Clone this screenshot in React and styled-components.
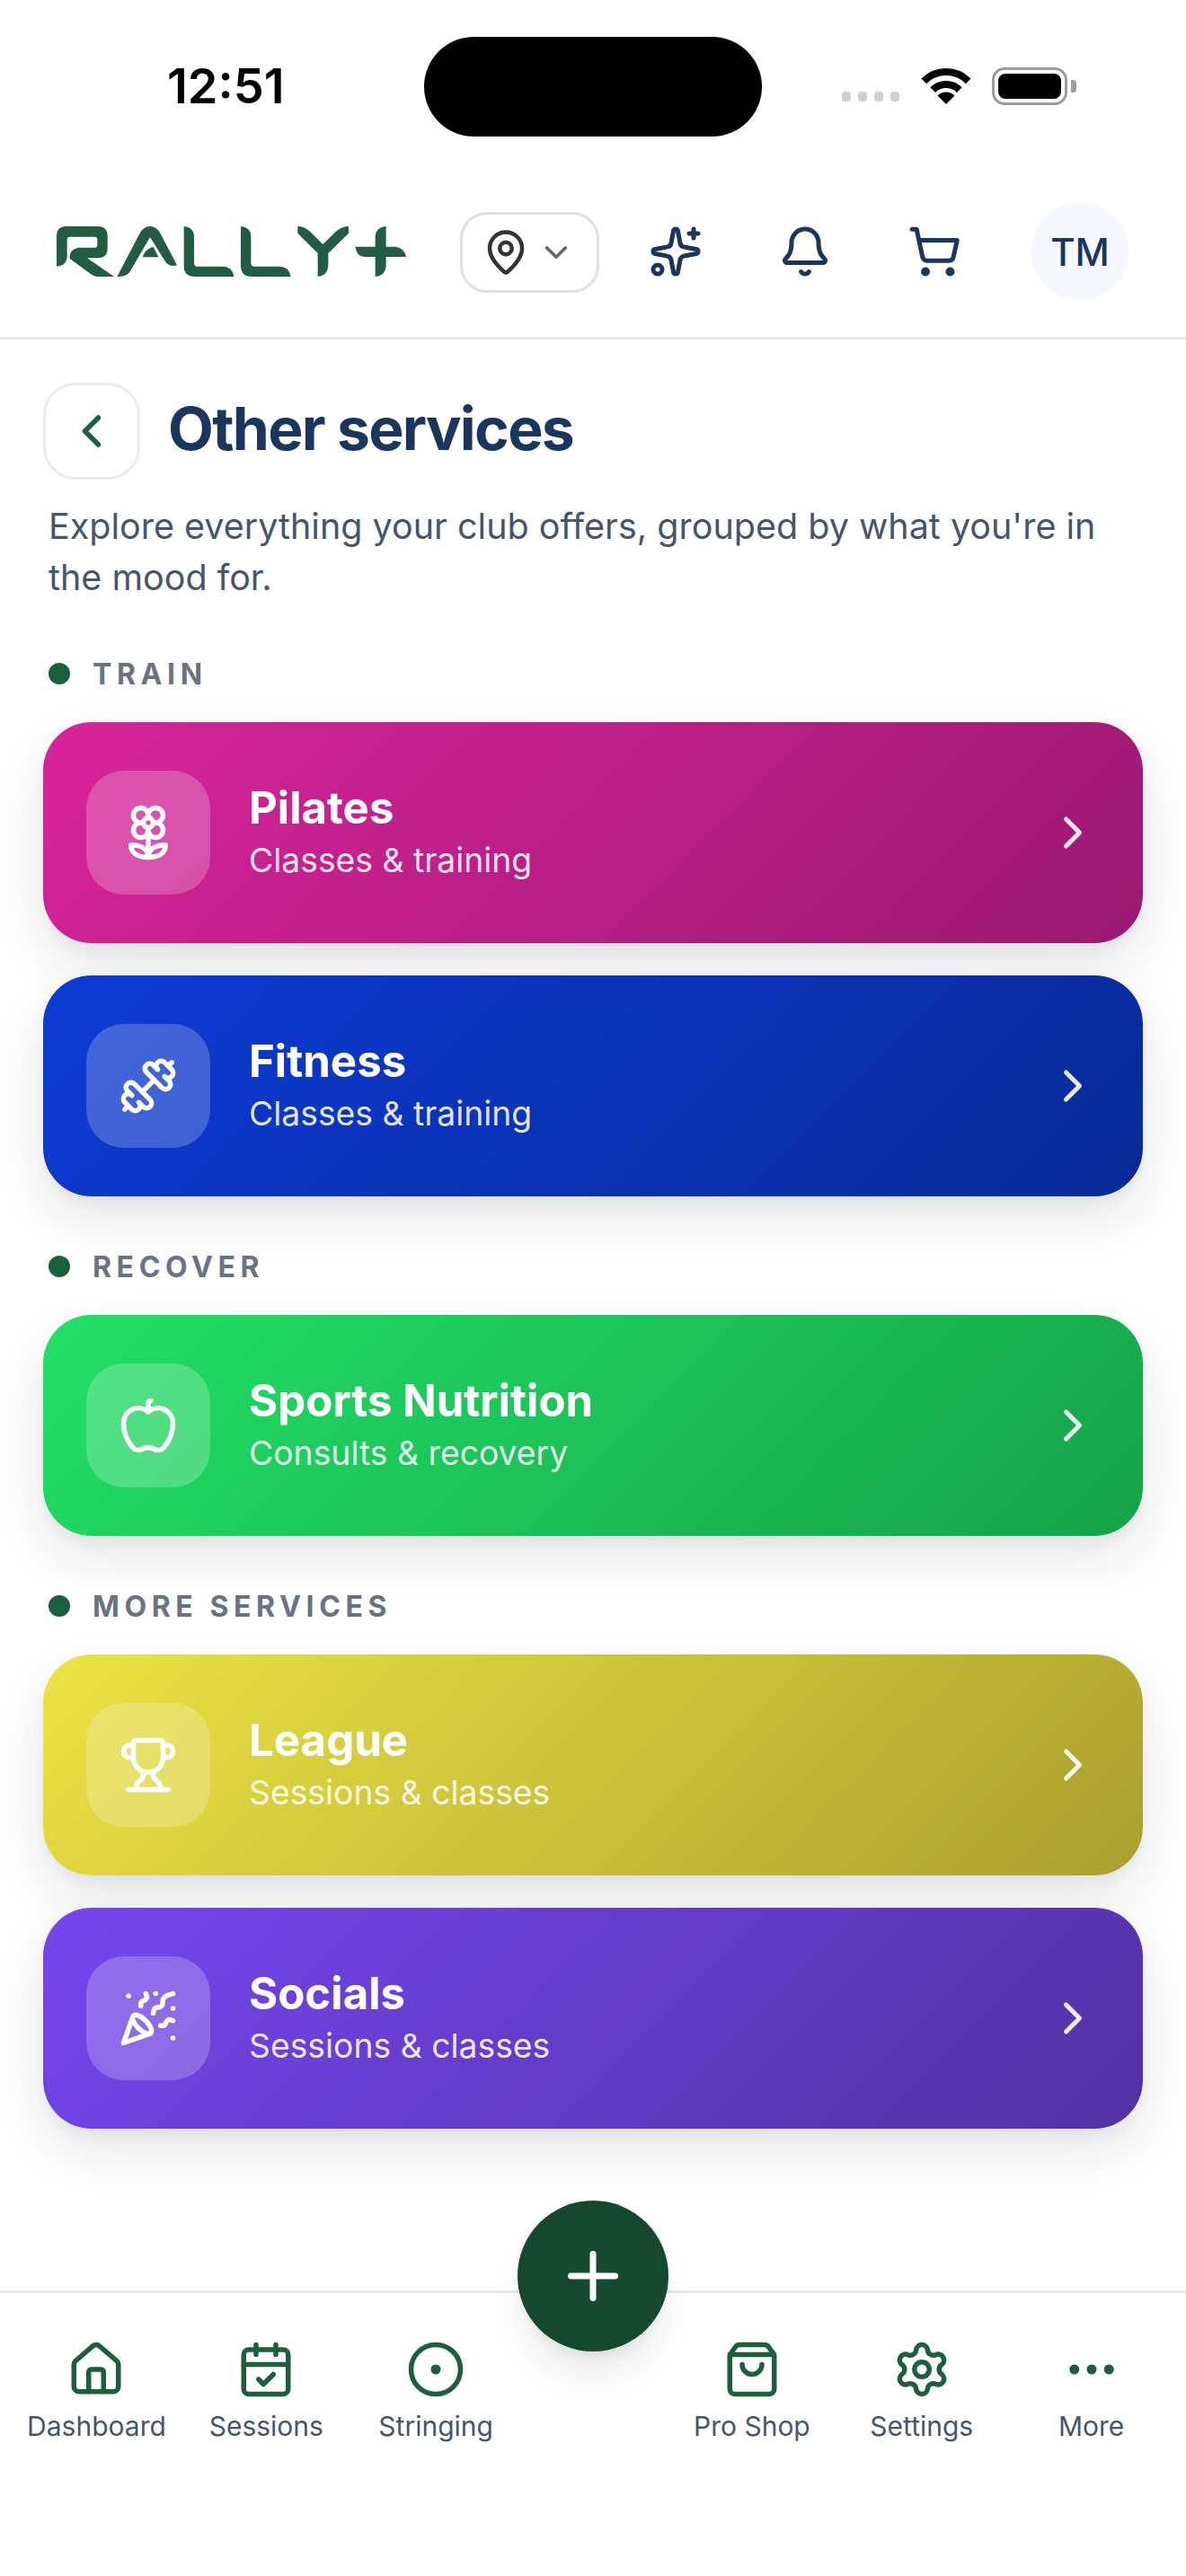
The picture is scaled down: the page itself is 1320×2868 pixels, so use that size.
import React from 'react';
import styled, { createGlobalStyle } from 'styled-components';
import {
  Apple, Bell, CalendarCheck, ChevronDown, ChevronLeft, ChevronRight, CircleDot, Dumbbell, Ellipsis,
  Flower2, House, MapPin, PartyPopper, Plus, Settings, ShoppingBag, ShoppingCart, Sparkles, Trophy,
} from 'lucide-react';

const GlobalStyle = createGlobalStyle`
  * { box-sizing: border-box; }
  html, body { margin: 0; padding: 0; background: #fff; }
  body { font-family: Inter, "Noto Sans", sans-serif; }
`;

const Page = styled.div`
  position: relative;
  width: 1320px;
  height: 2868px;
  display: flex;
  flex-direction: column;
  overflow: hidden;
  background: #fff;
`;

// status bar
const StatusBar = styled.div`
  height: 183px;
  flex: none;
  padding: 41px 0 0 186px;
  display: flex;
  align-items: flex-start;
`;
const Time = styled.div`
  width: 286px;
  height: 110px;
  line-height: 110px;
  font-size: 54px;
  font-weight: 600;
  color: #000;
`;
const Island = styled.div`
  width: 376px;
  height: 111px;
  border-radius: 56px;
  background: #000;
`;
const StatusIcons = styled.div`
  margin-left: 89px;
  height: 110px;
  display: flex;
  align-items: center;
`;
const SignalDots = styled.div`
  display: flex;
  gap: 8px;
  margin: 22px 23px 0 0;
`;
const SignalDot = styled.span`
  width: 10px;
  height: 11px;
  border-radius: 4px;
  background: #cfcfcf;
`;
const Battery = styled.div`
  margin-left: 22px;
  width: 84px;
  height: 42px;
  padding: 4px;
  border: 3px solid #9c9c9c;
  border-radius: 14px;
`;
const BatteryFill = styled.div`
  width: 100%;
  height: 100%;
  border-radius: 8px;
  background: #000;
`;
const BatteryCap = styled.div`
  margin-left: 4px;
  width: 6px;
  height: 14px;
  border-radius: 0 4px 4px 0;
  background: #9c9c9c;
`;

// app header
const Header = styled.header`
  height: 195px;
  flex: none;
  display: flex;
  align-items: center;
  padding: 2px 0 0 63px;
  border-bottom: 3px solid #e2e8f0;
`;
const Logo = styled.svg`
  width: 389px;
  height: 56px;
  flex: none;
`;
const LocationButton = styled.div`
  margin: 2px 13px 0 60px;
  width: 155px;
  height: 90px;
  padding-right: 4px;
  display: flex;
  align-items: center;
  justify-content: center;
  gap: 8px;
  border: 3px solid #e0e0e0;
  border-radius: 30px;
  color: #333;
`;
const HeaderIcon = styled.div`
  width: 144px;
  display: flex;
  justify-content: center;
  color: #1a365d;
`;
const Avatar = styled.div`
  margin-left: 36px;
  width: 108px;
  height: 108px;
  border-radius: 50%;
  background: #f5f8fc;
  color: #1a365d;
  display: flex;
  align-items: center;
  justify-content: center;
  font-size: 42px;
  font-weight: 500;
`;

// content
const Main = styled.main`
  flex: 1;
  padding: 48px 48px 0;
`;
const TitleRow = styled.div`
  display: flex;
  align-items: center;
  gap: 31px;
`;
const BackButton = styled.div`
  width: 108px;
  height: 108px;
  display: flex;
  align-items: center;
  justify-content: center;
  border: 3px solid #e8eded;
  border-radius: 36px;
  color: #1c5f3c;
`;
const Title = styled.h1`
  margin: 0 0 6px;
  font-size: 66px;
  font-weight: 700;
  letter-spacing: -1.7px;
  color: #1a365d;
`;
const Description = styled.p`
  margin: 24px 0 0;
  padding: 0 6px;
  font-size: 39.5px;
  line-height: 57px;
  color: #475569;
`;
const SectionLabel = styled.div`
  margin: 60px 0 36px;
  padding-left: 6px;
  height: 36px;
  display: flex;
  align-items: center;
  gap: 25px;
  font-size: 32px;
  font-weight: 700;
  letter-spacing: 0.175em;
  color: #6b7280;
`;
const LabelDot = styled.span`
  width: 24px;
  height: 24px;
  border-radius: 50%;
  background: #1c5f3c;
`;
const Cards = styled.div`
  display: flex;
  flex-direction: column;
  gap: 36px;
`;
const Card = styled.div`
  height: 246px;
  padding: 0 48px;
  display: flex;
  align-items: center;
  gap: 43px;
  border-radius: 54px;
  background: linear-gradient(135deg, ${p => p.$from}, ${p => p.$to});
  box-shadow: 0 24px 60px rgba(15, 23, 42, 0.11), 0 8px 16px rgba(15, 23, 42, 0.04);
  color: #fff;
`;
const CardIcon = styled.div`
  width: 138px;
  height: 138px;
  flex: none;
  display: flex;
  align-items: center;
  justify-content: center;
  border-radius: 42px;
  background: rgba(255, 255, 255, 0.22);
`;
const CardText = styled.div`
  flex: 1;
`;
const CardName = styled.div`
  font-size: 49.2px;
  line-height: 60px;
  font-weight: 700;
`;
const CardSub = styled.div`
  font-size: 37.3px;
  line-height: 54px;
  padding-top: 2px;
  color: rgba(255, 255, 255, 0.88);
`;
const CardArrow = styled(ChevronRight)`
  flex: none;
  color: rgba(255, 255, 255, 0.9);
`;

// bottom nav
const BottomNav = styled.nav`
  height: 318px;
  flex: none;
  padding: 52px 11px 0 13px;
  display: flex;
  align-items: flex-start;
  border-top: 3px solid #e2e8f0;
`;
const NavItem = styled.div`
  width: 189px;
  display: flex;
  flex-direction: column;
  align-items: center;
  gap: 9px;
  font-size: 30px;
  line-height: 42px;
  color: #475569;
  svg { color: #1c5f3c; }
`;
const NavSpacer = styled.div`
  width: 163px;
`;
const Fab = styled.div`
  position: absolute;
  left: 576px;
  top: 2450px;
  width: 168px;
  height: 168px;
  display: flex;
  align-items: center;
  justify-content: center;
  border-radius: 50%;
  background: #16482f;
  color: #fff;
  box-shadow: 0 30px 45px -9px rgba(0, 0, 0, 0.1), 0 12px 18px -12px rgba(0, 0, 0, 0.1);
`;

const sections = [
  {
    label: 'TRAIN',
    cards: [
      { name: 'Pilates', sub: 'Classes & training', icon: Flower2, from: '#d9249b', to: '#9a1970' },
      { name: 'Fitness', sub: 'Classes & training', icon: Dumbbell, from: '#0d3bd6', to: '#082a96' },
    ],
  },
  {
    label: 'RECOVER',
    cards: [{ name: 'Sports Nutrition', sub: 'Consults & recovery', icon: Apple, from: '#22e066', to: '#16a34a' }],
  },
  {
    label: 'MORE SERVICES',
    cards: [
      { name: 'League', sub: 'Sessions & classes', icon: Trophy, from: '#ece344', to: '#aaa02f' },
      { name: 'Socials', sub: 'Sessions & classes', icon: PartyPopper, from: '#7446ee', to: '#5331a3' },
    ],
  },
];

const WifiIcon = () => (
  <svg width="58" height="42" viewBox="0 0 58 42" fill="none">
    <path d="M4.3 15.3a35 35 0 0 1 49.4 0" stroke="#000" strokeWidth="8" />
    <path d="M14.2 25.2a21 21 0 0 1 29.6 0" stroke="#000" strokeWidth="8" />
    <path d="M29 41 19.5 31.5a13.5 13.5 0 0 1 19 0Z" fill="#000" />
  </svg>
);

const RallyLogo = () => (
  <Logo viewBox="68 182 1167 168" fill="#225c43">
    <path d="M68 316V215Q68 182 100 182H205Q238 182 238 215V255Q238 288 205 288H170L260 350H205Q195 350 185 343L112 290Q108 260 140 253H195Q204 253 204 244V226Q204 217 195 217H112Q103 217 103 226V285Q100 314 68 316Z" />
    <path d="M270 350 345 207Q358 182 380 182 402 182 415 207L470 312Q445 320 430 298L380 218 312 335Q302 350 270 350Z" />
    <path d="M355 285Q362 262 385 252H392L408 285Z" />
    <path d="M493 182Q525 185 527 215V305Q527 316 538 316H625Q655 318 660 350H530Q493 350 493 315Z" />
    <path d="M683 182Q715 185 717 215V305Q717 316 728 316H815Q845 318 850 350H720Q683 350 683 315Z" />
    <path d="M873 182Q895 182 915 200L957 242 1000 200Q1020 182 1043 182V205L975 272V315Q972 348 940 350V272L873 205Z" />
    <path d="M1132 350V284H1095Q1070 282 1065 250H1132V215Q1135 185 1168 182V250H1200Q1230 255 1235 284H1168V315Q1165 348 1132 350Z" />
  </Logo>
);

const navLeft = [
  { label: 'Dashboard', icon: House },
  { label: 'Sessions', icon: CalendarCheck },
  { label: 'Stringing', icon: CircleDot },
];
const navRight = [
  { label: 'Pro Shop', icon: ShoppingBag },
  { label: 'Settings', icon: Settings },
  { label: 'More', icon: Ellipsis },
];

const NavEntry = ({ item }) => (
  <NavItem>
    <item.icon size={66} strokeWidth={2} />
    {item.label}
  </NavItem>
);

export default function App() {
  return (
    <Page>
      <GlobalStyle />
      <StatusBar>
        <Time>12:51</Time>
        <Island />
        <StatusIcons>
          <SignalDots>
            <SignalDot />
            <SignalDot />
            <SignalDot />
            <SignalDot />
          </SignalDots>
          <WifiIcon />
          <Battery>
            <BatteryFill />
          </Battery>
          <BatteryCap />
        </StatusIcons>
      </StatusBar>

      <Header>
        <RallyLogo />
        <LocationButton>
          <MapPin size={54} strokeWidth={2} />
          <ChevronDown size={42} strokeWidth={2} color="#666" />
        </LocationButton>
        <HeaderIcon>
          <Sparkles size={60} strokeWidth={2} />
        </HeaderIcon>
        <HeaderIcon>
          <Bell size={60} strokeWidth={2} />
        </HeaderIcon>
        <HeaderIcon>
          <ShoppingCart size={60} strokeWidth={2} />
        </HeaderIcon>
        <Avatar>TM</Avatar>
      </Header>

      <Main>
        <TitleRow>
          <BackButton>
            <ChevronLeft size={60} strokeWidth={2.2} />
          </BackButton>
          <Title>Other services</Title>
        </TitleRow>
        <Description>Explore everything your club offers, grouped by what you're in the mood for.</Description>

        {sections.map(section => (
          <div key={section.label}>
            <SectionLabel>
              <LabelDot />
              {section.label}
            </SectionLabel>
            <Cards>
              {section.cards.map(card => (
                <Card key={card.name} $from={card.from} $to={card.to}>
                  <CardIcon>
                    <card.icon size={66} strokeWidth={2} />
                  </CardIcon>
                  <CardText>
                    <CardName>{card.name}</CardName>
                    <CardSub>{card.sub}</CardSub>
                  </CardText>
                  <CardArrow size={60} strokeWidth={2} />
                </Card>
              ))}
            </Cards>
          </div>
        ))}
      </Main>

      <BottomNav>
        {navLeft.map(item => <NavEntry key={item.label} item={item} />)}
        <NavSpacer />
        {navRight.map(item => <NavEntry key={item.label} item={item} />)}
      </BottomNav>
      <Fab>
        <Plus size={84} strokeWidth={2} />
      </Fab>
    </Page>
  );
}
